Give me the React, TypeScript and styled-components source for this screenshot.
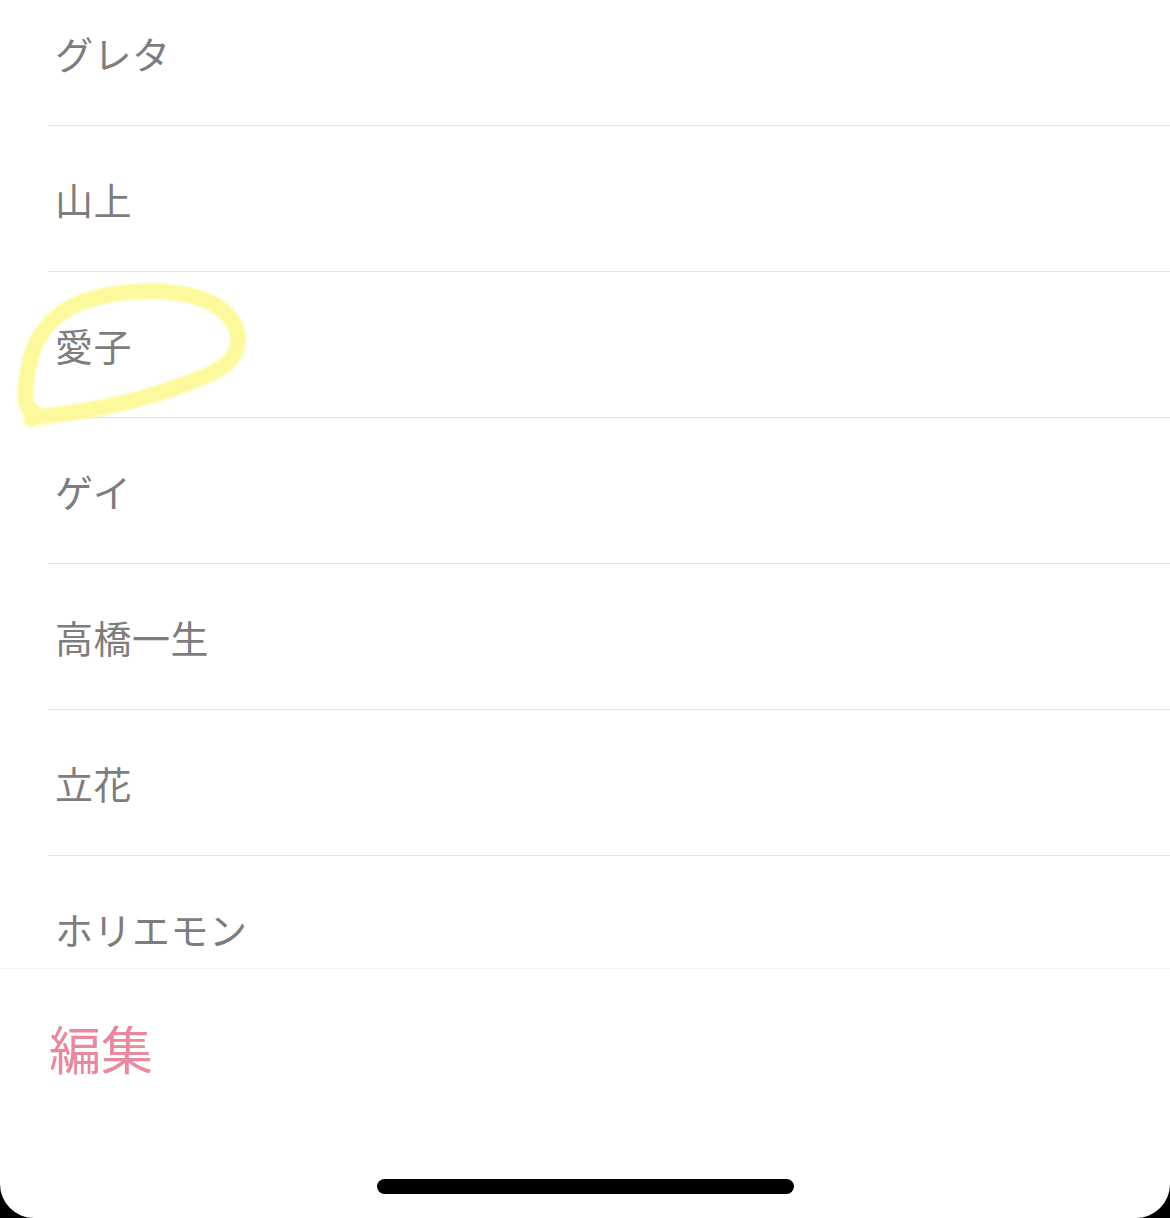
import React from 'react';
import styled, { createGlobalStyle } from 'styled-components';

const names = ['グレタ', '山上', '愛子', 'ゲイ', '高橋一生', '立花', 'ホリエモン'];

const GlobalStyle = createGlobalStyle`
  html, body {
    margin: 0;
    padding: 0;
    background: #000;
  }
  body {
    font-family: "Noto Sans CJK JP", "Noto Sans", sans-serif;
  }
`;

export default function App(): React.ReactElement {
  return (
    <Screen>
      <GlobalStyle />
      <ListArea>
        <List>
          {names.map((name) => (
            <Row key={name}>
              <Name>{name}</Name>
            </Row>
          ))}
        </List>
        {/* hand-drawn marker loop around 愛子 */}
        <Highlight viewBox="0 0 260 150" width="260" height="150">
          <path
            d="M38 134 C 24 131, 24 118, 27 98 C 30 68, 42 38, 82 22 C 122 8, 182 6, 217 26 C 247 46, 244 78, 214 92 C 172 112, 112 128, 62 134 C 46 136, 36 137, 31 139"
            fill="none"
            stroke="#fcf88c"
            strokeOpacity="0.85"
            strokeWidth="16"
            strokeLinecap="round"
            strokeLinejoin="round"
          />
        </Highlight>
      </ListArea>
      <Footer>
        <EditButton>編集</EditButton>
        <HomeBar />
      </Footer>
    </Screen>
  );
}

const Screen = styled('div')`
  display: flex;
  flex-direction: column;
  width: 1170px;
  height: 1218px;
  overflow: hidden;
  background: #fff;
  border-bottom-left-radius: 34px;
  border-bottom-right-radius: 34px;
`;

const ListArea = styled('div')`
  flex: 1;
  overflow: hidden;
  position: relative;
`;

const List = styled('div')`
  display: flex;
  flex-direction: column;
  margin-top: -20px;
`;

const Row = styled('div')`
  display: flex;
  align-items: center;
  height: 145px;
  margin-left: 48px;
  border-bottom: 1px solid #e2e2e2;
`;

const Name = styled('span')`
  padding-left: 7px;
  font-size: 38px;
  color: #7d7d7d;
  letter-spacing: 0.5px;
`;

const Highlight = styled('svg')`
  position: absolute;
  left: 0;
  top: 280px;
  pointer-events: none;
  filter: blur(0.8px);
`;

const Footer = styled('div')`
  height: 249px;
  border-top: 1px solid #f4f4f4;
  display: flex;
  flex-direction: column;
  align-items: center;
`;

const EditButton = styled('div')`
  align-self: flex-start;
  margin-top: 46px;
  padding-left: 49px;
  font-size: 52px;
  line-height: 66px;
  color: #e8899e;
`;

const HomeBar = styled('div')`
  margin-top: 98px;
  width: 417px;
  height: 15px;
  border-radius: 8px;
  background: #000;
`;
